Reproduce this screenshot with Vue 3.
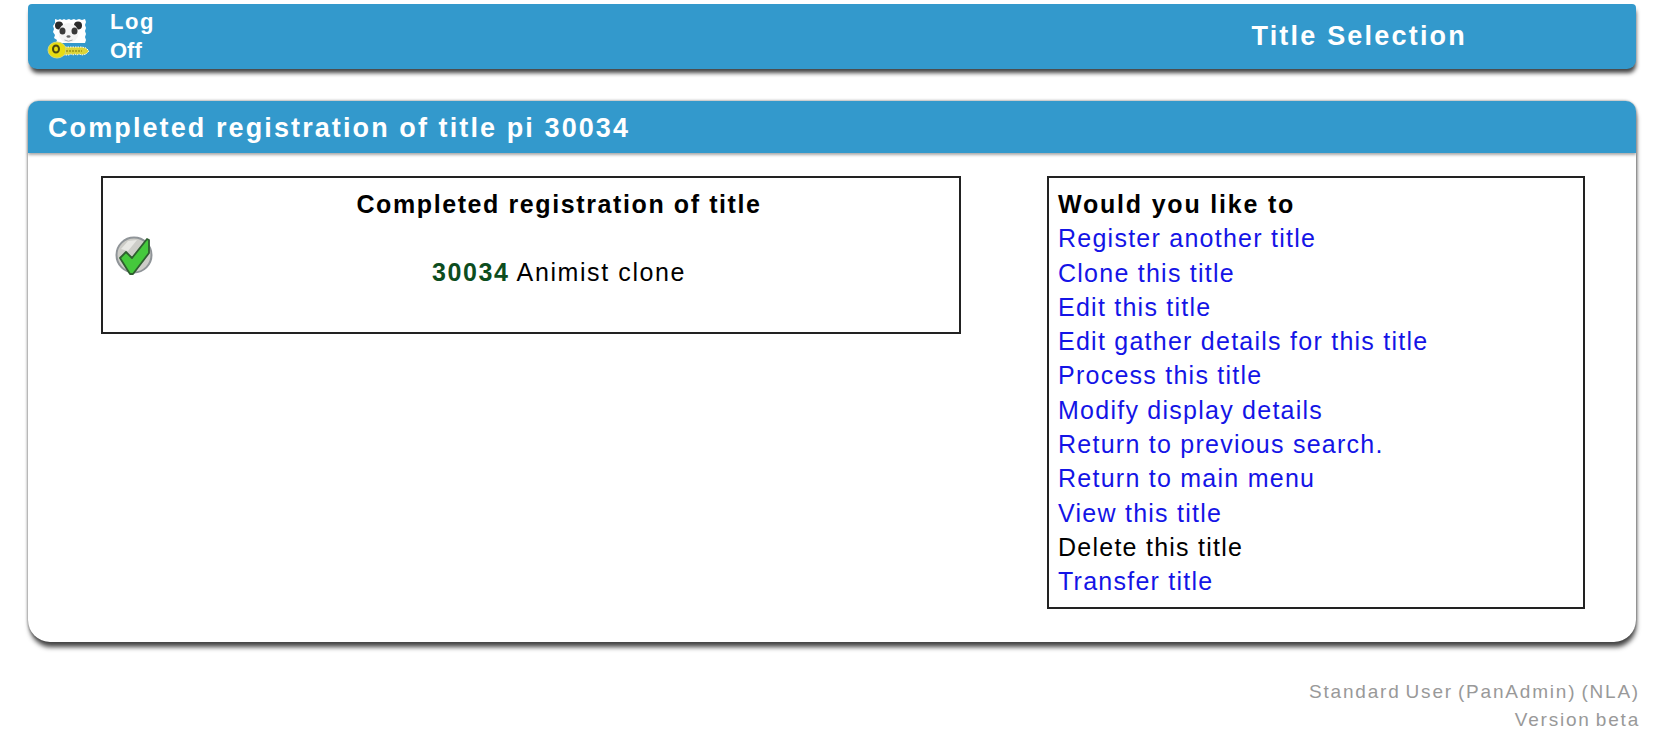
<template>
  <div class="page">
    <header class="bar top-bar">
      <a class="logoff">
        <svg class="panda" width="44" height="44" viewBox="0 0 44 44">
          <path d="M8 1l3 1 2-1 2 1 2-1 2 1 3-1 2 1 3-1 2 1 3-1 3 1 3-1 1 3-1 3 1 3-1 3 1 3-1 3 1 3-1 3H9l1-3-3-2 1-3-2-3 1-3-1-3 2-3z" fill="#fff" />
          <ellipse cx="12" cy="7.500" rx="4" ry="4" fill="#2a2a2a" />
          <ellipse cx="31" cy="7.500" rx="4" ry="4" fill="#2a2a2a" />
          <ellipse cx="21.500" cy="15" rx="10" ry="10" fill="#f4f4f4" />
          <ellipse cx="15.500" cy="13" rx="3" ry="3.600" fill="#3a3a3a" />
          <ellipse cx="27.500" cy="13" rx="3" ry="3.600" fill="#3a3a3a" />
          <ellipse cx="21.500" cy="18.500" rx="2" ry="1.300" fill="#666" />
          <path d="M17.500 22q4 2.500 8 0" fill="none" stroke="#aaa" />
          <path d="M13 29h22l4 1 3 3-3 3-4 1-3-1-2 1-2-1-2 1-2-1-2 1H13z" fill="#dcd43a" stroke="#fff" stroke-dasharray="1.500 1" />
          <ellipse cx="10" cy="32" rx="9" ry="8" fill="#e8dc10" stroke="#cfd77e" />
          <ellipse cx="9" cy="31" rx="3" ry="3.500" fill="none" stroke="#4a4710" stroke-width="2" />
          <path d="M19 33h16" stroke="#9c9416" stroke-width="1.500" stroke-dasharray="2 1" />
        </svg>
        <span class="logoff-text">Log<br /><small>Off</small></span>
      </a>
      <h1 class="screen-title">Title Selection</h1>
    </header>

    <section class="panel">
      <h2 class="bar panel-head">Completed registration of title pi {{ titleId }}</h2>
      <div class="panel-body">
        <div class="box result">
          <h3>Completed registration of title</h3>
          <svg class="tick" width="38" height="42" viewBox="0 0 38 42">
            <circle cx="19" cy="21" r="17.500" fill="#cdcdc8" stroke="#8f9498" stroke-width="2" />
            <path d="M6 15l7-8 9-1-9 11z" fill="#e8e8e4" />
            <path d="M5 24l6-6 6 6L32 5l2 1 0 13-16 21-3 0z" fill="#45c93c" stroke="#2f5f30" stroke-width="1.800" stroke-linejoin="round" />
          </svg>
          <p class="result-line"><strong>{{ titleId }}</strong> Animist clone</p>
        </div>

        <div class="box actions">
          <strong>Would you like to</strong>
          <template v-for="item in actions" :key="item.label">
            <a v-if="item.link" href="#">{{ item.label }}</a>
            <span v-else>{{ item.label }}</span>
          </template>
        </div>
      </div>
    </section>

    <footer class="status">
      Standard User (PanAdmin) (NLA)<br />
      Version beta
    </footer>
  </div>
</template>

<script setup>
const titleId = 30034

const actions = [
  { label: 'Register another title', link: true },
  { label: 'Clone this title', link: true },
  { label: 'Edit this title', link: true },
  { label: 'Edit gather details for this title', link: true },
  { label: 'Process this title', link: true },
  { label: 'Modify display details', link: true },
  { label: 'Return to previous search.', link: true },
  { label: 'Return to main menu', link: true },
  { label: 'View this title', link: true },
  { label: 'Delete this title', link: false },
  { label: 'Transfer title', link: true }
]
</script>

<style>
body {
  background: #fff;
}
</style>

<style scoped>
.page {
  box-sizing: border-box;
  width: 1677px;
  height: 750px;
  padding: 4px 41px 0 28px;
  font-family: "Liberation Sans", Arial, sans-serif;
  color: #000;
  overflow: hidden;
}

.bar {
  background: #3399cc;
  color: #fff;
}

.top-bar {
  display: flex;
  align-items: center;
  height: 65px;
  padding: 0 169px 0 19px;
  border-radius: 4px 4px 9px 9px;
  box-shadow: 1px 5px 4px -1px #444;
}

.logoff {
  display: flex;
  align-items: center;
  gap: 19px;
  width: 200px;
  font-weight: bold;
}

.panda {
  margin-top: 6px;
  flex: none;
}

.logoff-text {
  font-size: 22px;
  line-height: 29px;
  letter-spacing: 1.500px;
  margin-top: -2px;
}

.logoff-text small {
  font-size: 22px;
  letter-spacing: 0;
}

.screen-title {
  margin: 0 0 0 auto;
  font-size: 27px;
  letter-spacing: 2.200px;
}

.panel {
  margin-top: 32px;
  height: 541px;
  border-radius: 12px 12px 22px 22px;
  box-shadow: 1px 6px 5px -1px #444, 0 0 3px #777;
}

.panel-head {
  margin: 0;
  height: 52px;
  line-height: 54px;
  padding-left: 20px;
  font-size: 27px;
  letter-spacing: 2.100px;
  border-radius: 10px 10px 0 0;
  box-shadow: 0 2px 3px #aaa;
}

.panel-body {
  display: flex;
  justify-content: space-between;
  align-items: flex-start;
  padding: 23px 51px 0 73px;
}

.box {
  box-sizing: border-box;
  border: 2px solid #222;
  background: #fff;
}

.result {
  position: relative;
  width: 860px;
  height: 158px;
  padding-left: 56px;
  text-align: center;
}

.result h3 {
  margin: 11px 0 0;
  font-size: 25px;
  line-height: 30px;
  letter-spacing: 1.600px;
}

.tick {
  position: absolute;
  left: 12px;
  top: 56px;
}

.result-line {
  margin: 36px 0 0;
  font-size: 25px;
  line-height: 34px;
  letter-spacing: 1.600px;
}

.result-line strong {
  color: #0d4d1e;
}

.actions {
  display: flex;
  flex-direction: column;
  width: 538px;
  height: 433px;
  padding: 9px 9px;
  font-size: 25px;
  line-height: 34.300px;
  letter-spacing: 1.250px;
}

.actions strong {
  letter-spacing: 1.800px;
}

.actions a {
  color: #1414e6;
  text-decoration: none;
}

.status {
  margin: 36px -4px 0 0;
  text-align: right;
  color: #999;
  font-size: 19px;
  line-height: 28px;
  letter-spacing: 1.800px;
  word-spacing: -2px;
}
</style>
